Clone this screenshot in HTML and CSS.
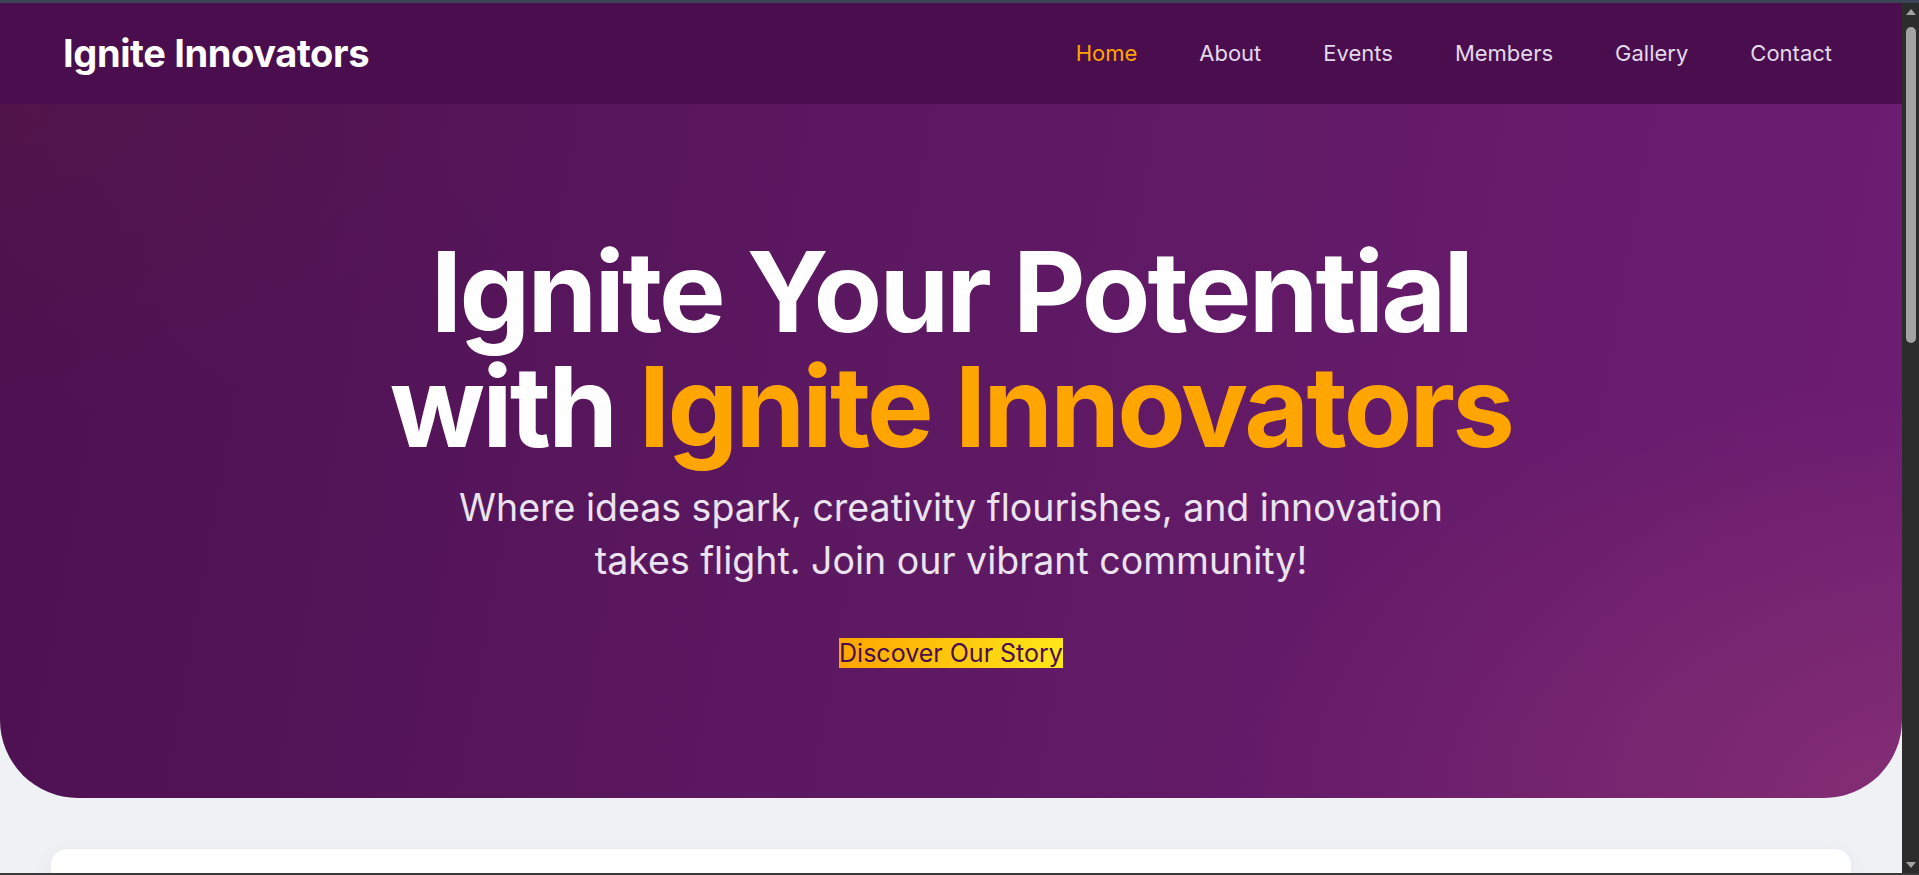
FILE: index.html
```html
<!DOCTYPE html>
<html lang="en">
<head>
<meta charset="utf-8">
<title>Ignite Innovators</title>
<link rel="stylesheet" href="styles.css">
</head>
<body>
<div class="frame-top"></div>
<div class="window">
  <div class="page">
    <header class="nav">
      <a class="logo" href="#">Ignite Innovators</a>
      <nav class="links">
        <a class="link active" href="#">Home</a>
        <a class="link" href="#">About</a>
        <a class="link" href="#">Events</a>
        <a class="link" href="#">Members</a>
        <a class="link" href="#">Gallery</a>
        <a class="link" href="#">Contact</a>
      </nav>
    </header>
    <section class="hero">
      <div class="hero-inner">
        <h1 class="headline">Ignite Your Potential with <span class="accent">Ignite Innovators</span></h1>
        <p class="lead">Where ideas spark, creativity flourishes, and innovation takes flight. Join our vibrant community!</p>
        <button class="cta">Discover Our Story</button>
      </div>
    </section>
    <section class="card"></section>
  </div>
  <div class="scrollbar">
    <div class="arrow-up"></div>
    <div class="track"><div class="thumb"></div></div>
    <div class="arrow-down"></div>
  </div>
</div>
<div class="frame-bottom"></div>
</body>
</html>
```
FILE: styles.css
```css
* { box-sizing: border-box; }
html, body { margin: 0; padding: 0; height: 100%; overflow: hidden; }
body {
  display: flex;
  flex-direction: column;
  font-family: Inter, "Noto Sans", sans-serif;
  background: #2b2b2b;
}
.frame-top { height: 3px; background: #3c4555; flex: none; }
.frame-bottom { height: 2px; background: #3a3a3a; flex: none; }
.window { flex: 1; display: flex; min-height: 0; }
.page {
  flex: 1;
  min-width: 0;
  background: #f0f1f5;
  overflow: hidden;
}
.nav {
  height: 101px;
  background: #4a0e4e;
  display: flex;
  align-items: center;
  justify-content: space-between;
  padding: 0 70px 2px 63px;
}
.logo {
  color: #fff;
  font-weight: 700;
  font-size: 38px;
  text-decoration: none;
  letter-spacing: -0.01em;
}
.links { display: flex; gap: 62px; }
.link {
  color: #e2d9ea;
  font-size: 22px;
  text-decoration: none;
}
.link.active { color: #ffa500; }
.hero {
  height: 694px;
  border-radius: 0 0 78px 78px;
  background:
    radial-gradient(ellipse 30% 45% at 0% 0%, rgba(110, 40, 40, 0.16), transparent 100%),
    radial-gradient(ellipse 35% 60% at 100% 100%, rgba(180, 80, 120, 0.32), transparent 100%),
    linear-gradient(100deg, #4c1050 0%, #5e1963 50%, #6d1d72 100%);
  display: flex;
  align-items: center;
  justify-content: center;
  text-align: center;
}
.hero-inner { display: flex; flex-direction: column; align-items: center; }
.headline {
  margin: 0;
  max-width: 1200px;
  color: #fff;
  font-size: 112px;
  font-weight: 700;
  line-height: 1.02;
  letter-spacing: -0.025em;
}
.accent { color: #ffa500; }
.lead {
  margin: 18px 0 51px;
  max-width: 1024px;
  color: #ebe3ef;
  font-size: 37.5px;
  line-height: 53px;
}
.cta {
  border: 0;
  padding: 0;
  margin: 0;
  font-family: Inter, "Noto Sans", sans-serif;
  font-size: 25px;
  line-height: 30px;
  color: #4a0e4e;
  background: linear-gradient(90deg, #ffa500, #ffe81a);
  cursor: pointer;
}
.card {
  max-width: 1800px;
  height: 200px;
  margin: 51px auto 0;
  background: #fff;
  border-radius: 16px;
  box-shadow: 0 4px 20px rgba(60, 20, 80, 0.05);
}
.scrollbar {
  width: 17px;
  flex: none;
  background: #2c2c2c;
  display: flex;
  flex-direction: column;
  align-items: center;
}
.arrow-up, .arrow-down {
  height: 17px;
  width: 17px;
  flex: none;
  display: flex;
  align-items: center;
  justify-content: center;
}
.arrow-up::before {
  content: "";
  border-left: 5px solid transparent;
  border-right: 5px solid transparent;
  border-bottom: 6px solid #a3a3a3;
}
.arrow-down::before {
  content: "";
  border-left: 5px solid transparent;
  border-right: 5px solid transparent;
  border-top: 6px solid #a3a3a3;
}
.track { flex: 1; width: 100%; padding: 7px 3px 0 4px; }
.thumb { height: 316px; background: #a3a3a3; border-radius: 5px; }
```
